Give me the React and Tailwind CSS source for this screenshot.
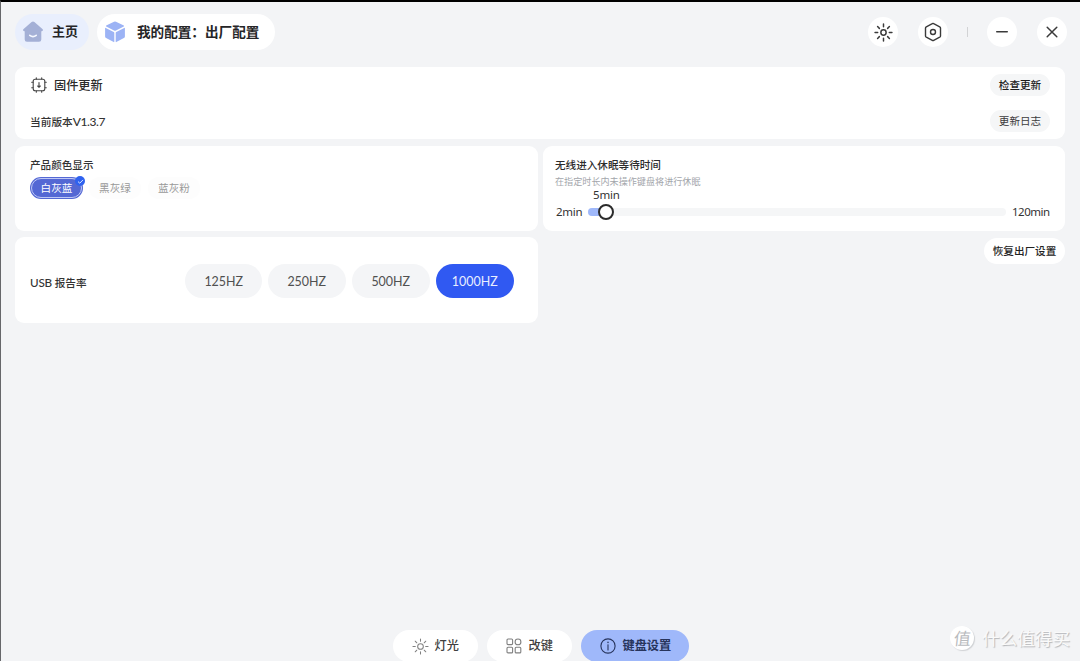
import React from "react";

const FONT = "font-['Noto_Sans','Noto_Sans_CJK_SC',sans-serif]";

function HomeIcon() {
  return (
    <svg width="22" height="22" viewBox="0 0 22 22" className="block shrink-0">
      <path
        d="M9.6 1.1a2.2 2.2 0 0 1 2.8 0l8 6.9c1 .9.6 2.2-.7 2.2h-.4v8.300a2.300 2.300 0 0 1-2.300 2.300H5a2.300 2.300 0 0 1-2.300-2.300v-8.300h-.4C1 10.200.6 8.900 1.600 8z"
        fill="#a4b0d6"
      />
      <path d="M7.800 14.400c1.900 1.500 4.500 1.500 6.400 0" stroke="#f4f7ff" strokeWidth="1.700" strokeLinecap="round" fill="none" />
    </svg>
  );
}

function CubeIcon() {
  return (
    <svg width="22" height="22" viewBox="0 0 22 22" className="block shrink-0">
      <path d="M10 .8a2 2 0 0 1 2 0l7.800 3.700c.4.200.4.700 0 .9L11.500 9.700a1 1 0 0 1-1 0L2.200 5.400c-.4-.2-.4-.7 0-.9z" fill="#9cb3f5" />
      <path d="M1.800 6.900 9.700 11c.4.200.6.500.6.900v8.800c0 .4-.3.500-.6.400l-7.600-4a1.800 1.800 0 0 1-1-1.600V7.300c0-.4.300-.6.700-.4z" fill="#9cb3f5" />
      <path d="M20.200 6.900 12.300 11c-.4.200-.6.500-.6.900v8.800c0 .4.300.5.600.4l7.600-4a1.800 1.800 0 0 0 1-1.600V7.300c0-.4-.3-.6-.7-.4z" fill="#9cb3f5" />
    </svg>
  );
}

function SunIcon({ size, color, width, radius = 3 }) {
  return (
    <svg width={size} height={size} viewBox="0 0 18 18" fill="none" stroke={color} strokeWidth={width} strokeLinecap="round" className="block shrink-0">
      <circle cx="9" cy="9" r={radius} />
      <path d="M9 1v2.500M9 14.500V17M1 9h2.500M14.500 9H17M3.400 3.400l1.700 1.700M12.900 12.900l1.700 1.700M3.400 14.600l1.700-1.700M12.900 5.100l1.700-1.700" />
    </svg>
  );
}

function HexIcon() {
  return (
    <svg width="20" height="20" viewBox="0 0 20 20" fill="none" stroke="#3a3a3a" strokeWidth="1.400" strokeLinejoin="round" className="block">
      <path d="M9.300 1.700a1.400 1.400 0 0 1 1.400 0l6 3.100c.5.300.8.700.8 1.300v7.800c0 .6-.3 1-.8 1.300l-6 3.100a1.400 1.400 0 0 1-1.400 0l-6-3.100c-.5-.3-.8-.7-.8-1.300V6.100c0-.6.300-1 .8-1.300z" />
      <circle cx="10" cy="10" r="2.500" />
    </svg>
  );
}

function ChipIcon() {
  return (
    <svg width="16" height="16" viewBox="0 0 16 16" fill="none" stroke="#444" strokeWidth="1.100" strokeLinecap="round" className="block shrink-0">
      <rect x="2.200" y="2.200" width="11.600" height="11.600" rx="2" />
      <path d="M5.300 2V.7M10.700 2V.7M5.300 15.300V14M10.700 15.300V14M2 5.300H.7M2 10.700H.7M15.300 5.300H14M15.300 10.700H14" />
      <path d="M8 5.500v4.600M6.700 9 8 10.300 9.300 9" />
    </svg>
  );
}

function BlocksIcon() {
  return (
    <svg width="16" height="16" viewBox="0 0 16 16" fill="none" stroke="#808080" strokeWidth="1.100" className="block shrink-0">
      <rect x="1" y="1" width="5.600" height="5.600" rx="1" />
      <circle cx="12" cy="3.900" r="2.900" />
      <rect x="1" y="9.300" width="5.600" height="5.600" rx="1" />
      <rect x="9.200" y="9.300" width="5.600" height="5.600" rx="1" />
    </svg>
  );
}

function InfoIcon() {
  return (
    <svg width="16" height="16" viewBox="0 0 16 16" fill="none" stroke="#27345c" strokeWidth="1.100" strokeLinecap="round" className="block shrink-0">
      <circle cx="8" cy="8" r="7.100" />
      <path d="M8 6.800v5.200" />
      <path d="M8 4.200v.3" strokeWidth="1.400" />
    </svg>
  );
}

function RoundButton({ className = "", label, children }) {
  return (
    <button aria-label={label} className={`flex size-[30px] shrink-0 items-center justify-center rounded-full bg-white ${className}`}>
      {children}
    </button>
  );
}

function Header() {
  return (
    <header className="flex h-9 items-center">
      <button className="flex h-9 w-[74px] items-center rounded-full bg-[#e9effd] pl-[7px] text-[13px] font-bold text-[#252527]">
        <HomeIcon />
        <span className="ml-[8px] whitespace-nowrap">主页</span>
      </button>
      <button className="ml-2 flex h-9 w-[178px] items-center rounded-full bg-white pl-[7px] text-[13.600px] font-bold text-[#252527]">
        <CubeIcon />
        <span className="ml-[11px] whitespace-nowrap">我的配置：出厂配置</span>
      </button>
      <div className="ml-auto flex items-center pr-[13px]">
        <RoundButton label="theme">
          <SunIcon size={19} color="#3a3a3a" width={1.400} radius={2.500} />
        </RoundButton>
        <RoundButton label="settings" className="ml-5">
          <HexIcon />
        </RoundButton>
        <span className="ml-[19px] h-[10px] w-px bg-[#d2d3d5]" />
        <RoundButton label="minimize" className="ml-[19px]">
          <svg width="12" height="12" viewBox="0 0 12 12" stroke="#3a3a3a" strokeWidth="1.400" strokeLinecap="round">
            <path d="M.700 5.700h10.600" />
          </svg>
        </RoundButton>
        <RoundButton label="close" className="ml-5">
          <svg width="12" height="12" viewBox="0 0 12 12" stroke="#3a3a3a" strokeWidth="1.500" strokeLinecap="round">
            <path d="M1.200 1.200l9.600 9.600M10.800 1.200l-9.600 9.600" />
          </svg>
        </RoundButton>
      </div>
    </header>
  );
}

function FirmwareCard() {
  return (
    <section className="mt-[17px] flex h-[72px] flex-col rounded-[9px] bg-white pr-[15px] pl-[15px] pt-[7px]">
      <div className="flex h-[22px] items-center">
        <span className="ml-[1px]"><ChipIcon /></span>
        <span className="ml-[7px] pt-[2px] text-[12.200px] font-medium text-[#2b2b2b]">固件更新</span>
        <button className="ml-auto h-[22px] w-[60px] rounded-full bg-[#f5f6f7] pt-[2px] text-[10.600px] font-medium text-[#1d1d1d]">检查更新</button>
      </div>
      <div className="mt-[14px] flex h-[22px] items-center">
        <span className="pt-px text-[10.700px] font-medium text-[#333]">
          当前版本<span className="font-['Lato'] text-[12px] tracking-[-0.400px]">V1.3.7</span>
        </span>
        <button className="ml-auto h-[22px] w-[60px] rounded-full bg-[#f5f6f7] pt-[2px] text-[10.600px] font-normal text-[#3c3c3c]">更新日志</button>
      </div>
    </section>
  );
}

function ColorCard() {
  return (
    <section className="h-[85px] w-[523px] rounded-[9px] bg-white pl-[15px] pt-[11px]">
      <h2 className="h-4 text-[10.600px] leading-4 font-medium text-[#333]">产品颜色显示</h2>
      <div className="mt-[4px] flex items-center text-[10.600px]">
        <button className="relative h-[22px] w-[53px] rounded-full bg-[#5468d4] p-px font-normal text-white">
          <span className="flex h-full w-full items-center justify-center rounded-full border border-[#bfc8f6] pt-px leading-none">白灰蓝</span>
          <span className="absolute -top-[1px] -right-[2px] flex size-[10px] items-center justify-center rounded-full bg-[#2f62ef]">
            <svg width="7" height="7" viewBox="0 0 7 7" fill="none" stroke="#d8e3ff" strokeWidth="1">
              <path d="M1 3.600 2.800 5.200 6 1.900" />
            </svg>
          </span>
        </button>
        <button className="ml-[6px] h-[22px] w-[52px] rounded-full bg-[#fdfdfd] pt-[2px] text-[#999]">黑灰绿</button>
        <button className="ml-[7px] h-[22px] w-[52px] rounded-full bg-[#fdfdfd] pt-[2px] text-[#999]">蓝灰粉</button>
      </div>
    </section>
  );
}

function SleepCard() {
  return (
    <section className="h-[85px] w-[522px] rounded-[9px] bg-white pl-[12px] pt-[11px]">
      <h2 className="h-4 text-[10.600px] leading-4 font-medium text-[#2b2b2b]">无线进入休眠等待时间</h2>
      <p className="mt-[3px] h-3 text-[9.100px] leading-3 text-[#a3a6ab]">在指定时长内未操作键盘将进行休眠</p>
      <div className="mt-px h-3 pl-[38px] text-[11.500px] leading-3 tracking-[-0.200px] text-[#333]">5min</div>
      <div className="mt-[3px] flex h-4 items-center pl-px text-[11.500px] leading-4 tracking-[-0.250px] text-[#333]">
        <span className="w-8">2min</span>
        <div className="relative h-2 w-[418px] rounded-full bg-[#f5f6f7]">
          <div className="h-2 w-[18px] rounded-full bg-[#9fb8fa]" />
          <div className="absolute -top-1 left-[9.500px] size-4 rounded-full border-2 border-[#2b2b2b] bg-white" />
        </div>
        <span className="ml-[6px] tracking-[-0.500px]">120min</span>
      </div>
    </section>
  );
}

const RATES = ["125HZ", "250HZ", "500HZ", "1000HZ"];

function RateCard() {
  return (
    <section className="flex h-[86px] w-[523px] items-center rounded-[9px] bg-white pl-[15px]">
      <h2 className="w-[154.500px] pt-[6px] text-[10.600px] font-medium text-[#333]">
        <span className="font-['Lato'] text-[11.700px] tracking-[-0.200px]">USB</span> 报告率
      </h2>
      <div className="flex gap-[6px] pt-px font-['Lato'] text-[14px]">
        {RATES.map((rate) => (
          <button
            key={rate}
            className={
              rate === "1000HZ"
                ? "h-[34px] w-[77.800px] rounded-full bg-[#3059f2] text-[#e8eeff]"
                : "h-[34px] w-[77.800px] rounded-full bg-[#f4f5f7] text-[#505050]"
            }
          >
            <span className="inline-block scale-x-[0.89]">{rate}</span>
          </button>
        ))}
      </div>
    </section>
  );
}

function BottomNav() {
  return (
    <nav className="mt-auto flex h-[31px] justify-center gap-[9px] overflow-hidden pr-[14px] text-[12.200px] font-medium text-[#404040]">
      <button className="flex h-8 w-[85px] items-center rounded-full bg-white pl-[19px]">
        <SunIcon size={17} color="#808080" width={1.100} />
        <span className="ml-[6px] whitespace-nowrap">灯光</span>
      </button>
      <button className="flex h-8 w-[85px] items-center rounded-full bg-white pl-[19px]">
        <BlocksIcon />
        <span className="ml-[7px] whitespace-nowrap">改键</span>
      </button>
      <button className="flex h-8 w-[108px] items-center rounded-full bg-[#9fb8fa] pl-[19px] font-bold text-[#27345c]">
        <InfoIcon />
        <span className="ml-[7px] whitespace-nowrap">键盘设置</span>
      </button>
    </nav>
  );
}

function Watermark() {
  return (
    <div className="absolute right-[10px] bottom-[11px] flex items-center">
      <span className="flex size-6 items-center justify-center rounded-full bg-white text-[17px] leading-none text-[#b9bbbe] shadow-[1px_1px_1px_#cfd1d4]">
        <span className="-skew-x-6">值</span>
      </span>
      <span className="ml-[8px] text-[17.600px] leading-6 text-[#fafafa] [text-shadow:1px_1px_1px_#b4b6b9]">什么值得买</span>
    </div>
  );
}

export default function App() {
  return (
    <div className={`relative flex h-[661px] w-[1080px] flex-col overflow-hidden border-t-2 border-l border-t-black border-l-[#66676a] bg-[#f3f4f6] pt-3 pl-[14px] ${FONT}`}>
      <Header />
      <main className="w-[1050px]">
        <FirmwareCard />
        <div className="mt-[7px] flex gap-[5px]">
          <ColorCard />
          <SleepCard />
        </div>
        <div className="mt-[6px] flex items-start justify-between">
          <RateCard />
          <button className="mt-px h-[26px] w-[81px] rounded-full bg-white pt-px text-[10.600px] font-medium text-[#222]">恢复出厂设置</button>
        </div>
      </main>
      <BottomNav />
      <Watermark />
    </div>
  );
}
